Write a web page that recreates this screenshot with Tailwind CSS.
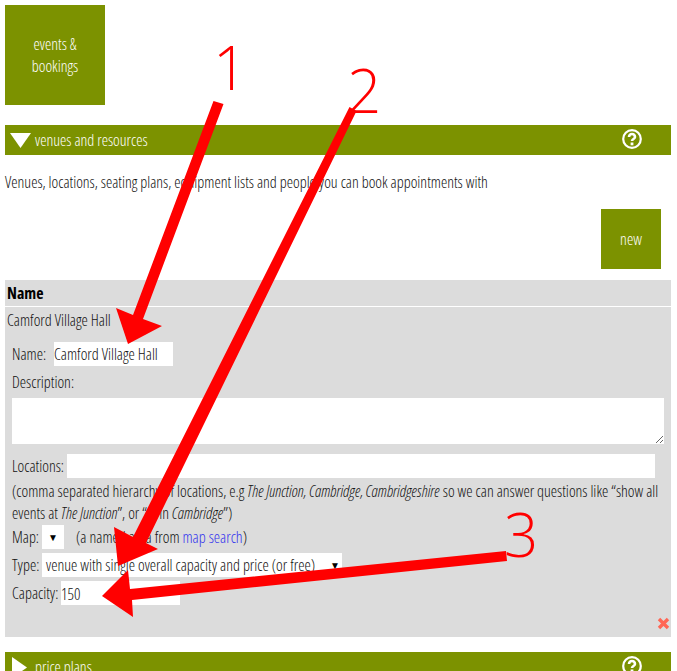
<!doctype html>
<html lang="en">

<head>
    <meta charset="UTF-8">
    <meta name="viewport" content="width=device-width, initial-scale=1.0">
    <script src="https://cdn.jsdelivr.net/npm/@tailwindcss/browser@4"></script>
    <title>Venues and resources</title>
</head>

<body class="bg-white font-['Open_Sans',sans-serif] [font-stretch:75%] font-light text-[15.93px] leading-[21px] text-[#111] h-[671px] overflow-hidden">
    <div class="relative h-[671px] overflow-hidden p-[5px]">
        <!-- Top tile -->
        <a class="flex items-center justify-center w-[100px] h-[100px] bg-[#7c9200] text-white font-[350] text-center leading-[22px]">events &amp;<br>bookings</a>

        <!-- Venues section -->
        <div class="flex items-center justify-between mt-[20px] w-[666px] h-[30px] bg-[#7c9200] text-white font-[350] pl-[5px] pr-[29px]">
            <div class="flex items-center gap-[4px]">
                <svg width="21" height="15" viewBox="0 0 21 15"><path d="M0 0H21L10.500 15Z" fill="#fff"/></svg>
                <span>venues and resources</span>
            </div>
            <svg class="-mt-[3px]" width="20" height="20" viewBox="0 0 20 20" fill="none"><circle cx="10" cy="10" r="8.800" stroke="#fff" stroke-width="2.200"/><path d="M7 8c0-4 6-4 6 0 0 2-3 2-3 4" stroke="#fff" stroke-width="2.600"/><rect x="8.600" y="13.500" width="2.800" height="2.800" fill="#fff"/></svg>
        </div>

        <p class="mt-[17px] h-[21px]">Venues, locations, seating plans, equipment lists and people you can book appointments with</p>

        <div class="flex justify-end mt-[16px] w-[656px]">
            <a class="flex items-center justify-center w-[60px] h-[60px] bg-[#7c9200] text-white font-[350]">new</a>
        </div>

        <!-- Venue table -->
        <div class="mt-[11px] w-[666px] h-[357px] bg-[#dcdcdc] relative">
            <div class="h-[27px] px-[2px] pt-[3px] border-b border-white text-black font-bold">Name</div>
            <div class="px-[2px] pt-[3px] h-[25px]">Camford Village Hall</div>
            <div class="px-[7px]">
                <div class="flex items-center h-[24px] mt-[10px]">
                    <span class="w-[42px]">Name:</span>
                    <input value="Camford Village Hall" class="w-[119px] h-[24px] bg-white pl-0 text-[#111]">
                </div>
                <div class="mt-[6px] h-[21px]">Description:</div>
                <textarea class="block mt-[5px] w-[652px] h-[46px] bg-white"></textarea>
                <div class="flex items-center h-[24px] mt-[10px]">
                    <span class="w-[55px]">Locations:</span>
                    <input class="w-[588px] h-[24px] bg-white">
                </div>
                <p class="w-[652px] leading-[22px] mt-[2px]">(comma separated hierarchy of locations, e.g <i>The Junction, Cambridge, Cambridgeshire</i> so we can answer questions like “show all events at <i>The Junction</i>”, or “... in <i>Cambridge</i>”)</p>
                <div class="flex items-center h-[24px] mt-[1px]">
                    <span class="w-[30px]">Map:</span>
                    <span class="flex items-center justify-center w-[22px] h-[24px] bg-white text-black text-[10px]">▼</span>
                    <span class="ml-[12px]">(a named area from <a class="text-[#3333ee]">map search</a>)</span>
                </div>
                <div class="flex items-center h-[24px] mt-[4px]">
                    <span class="w-[30px] pt-[1px]">Type:</span>
                    <span class="flex items-center justify-between w-[300px] h-[24px] bg-white pl-[4px] pr-[2px] pt-[1px]">venue with single overall capacity and price (or free)<span class="text-black text-[10px]">▼</span></span>
                </div>
                <div class="flex items-center h-[24px] mt-[4px]">
                    <span class="w-[49px] pt-[1px]">Capacity:</span>
                    <input value="150" class="w-[119px] h-[24px] bg-white pl-0 pt-[1px] text-[#111]">
                </div>
            </div>
            <svg class="absolute right-[1px] bottom-[7px]" width="13" height="13" viewBox="0 0 13 13"><path d="M2 2L11 11M11 2L2 11" stroke="#ff6655" stroke-width="3.400"/></svg>
        </div>

        <!-- Price plans section -->
        <div class="flex items-center justify-between mt-[15px] w-[666px] h-[30px] bg-[#7c9200] text-white font-[350] pl-[7px] pr-[29px]">
            <div class="flex items-center gap-[8px]">
                <svg width="15" height="21" viewBox="0 0 15 21"><path d="M0 0V21L15 10.500Z" fill="#fff"/></svg>
                <span>price plans</span>
            </div>
            <svg class="-mt-[3px]" width="20" height="20" viewBox="0 0 20 20" fill="none"><circle cx="10" cy="10" r="8.800" stroke="#fff" stroke-width="2.200"/><path d="M7 8c0-4 6-4 6 0 0 2-3 2-3 4" stroke="#fff" stroke-width="2.600"/><rect x="8.600" y="13.500" width="2.800" height="2.800" fill="#fff"/></svg>
        </div>

        <!-- Red annotations over the screenshot -->
        <svg class="absolute left-0 top-0 pointer-events-none" width="677" height="671" viewBox="0 0 677 671" fill="#f00">
            <path d="M213.500 101L223.500 104L143 319L162 326L128 344L116 308L133 315Z"/>
            <path d="M349.500 107L356.500 111L146 543L158 549L118 566L114 527L133 537Z"/>
            <path d="M506 551L507 561L132 600L133 617L102 596L128 570L130 589Z"/>
        </svg>
        <span class="absolute left-[213px] top-[27px] text-[60px] leading-[80px] text-[#f00] [font-stretch:100%] font-[340]">1</span>
        <span class="absolute left-[347px] top-[50px] text-[60px] leading-[80px] text-[#f00] [font-stretch:100%] font-[340]">2</span>
        <span class="absolute left-[504px] top-[494px] text-[60px] leading-[80px] text-[#f00] [font-stretch:100%] font-[340]">3</span>
    </div>
</body>

</html>
